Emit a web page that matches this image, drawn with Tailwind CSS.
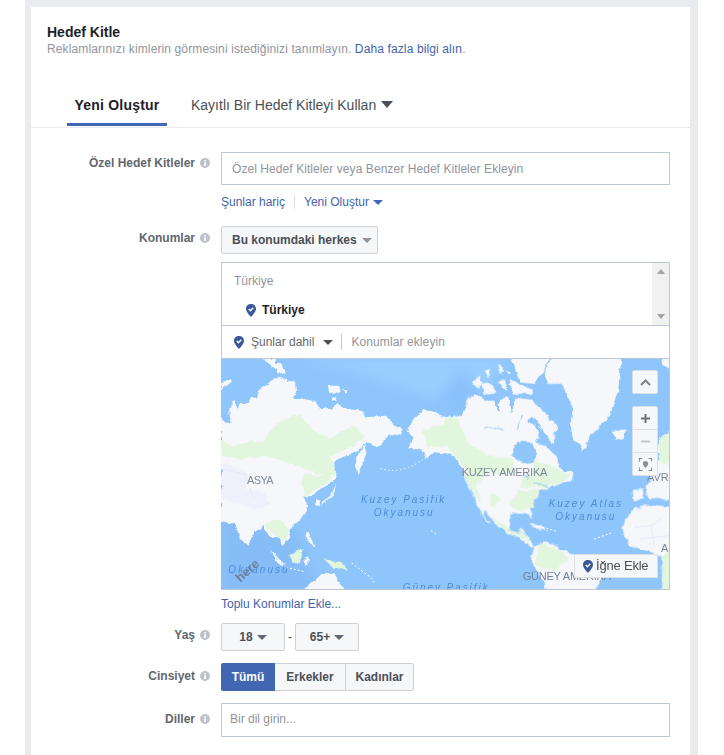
<!DOCTYPE html>
<html lang="tr">
<head>
  <meta charset="UTF-8">
  <title>Hedef Kitle</title>
  <script src="https://cdn.jsdelivr.net/npm/@tailwindcss/browser@4"></script>
</head>
<body class="bg-white font-['Liberation_Sans',Arial,sans-serif] overflow-hidden">
  <svg class="hidden">
    <symbol id="info" viewBox="0 0 10 10"><circle cx="5" cy="5" r="5" fill="#bec2c9"/><rect x="4.2" y="4.2" width="1.7" height="3.8" fill="#fff"/><rect x="4.3" y="2" width="1.6" height="1.5" fill="#fff"/></symbol>
    <symbol id="pin" viewBox="0 0 10 13"><path d="M5 0C2.2 0 0 2 0 4.7 0 7.6 3 10.6 5 13c2-2.4 5-5.4 5-8.3C10 2 7.8 0 5 0z" fill="#3b5998"/><path d="M2.8 5l1.6 1.7 2.9-3" fill="none" stroke="#fff" stroke-width="1.3"/></symbol>
  </svg>

  <div class="ml-[25px] w-[673px] h-[755px] bg-[#e9ebee] pt-[7px] pl-[6px] pr-[8px]">
    <div class="bg-white h-full">
      <div class="pl-[16px] pt-[17px]">
        <h2 class="text-[14px] leading-[17px] font-bold text-[#1d2129]">Hedef Kitle</h2>
        <p class="text-[12px] leading-[16px] text-[#90949c] tracking-[0.12px]">Reklamlarınızı kimlerin görmesini istediğinizi tanımlayın. <span class="text-[#3f63ad]">Daha fazla bilgi alın</span>.</p>
      </div>

      <!-- tabs -->
      <div class="flex h-[40px] mt-[31px] pl-[36px] border-b border-[#e9ebee]">
        <div class="w-[100px] h-[38px] border-b-[3px] border-[#4267b2] text-center text-[14px] leading-[34px] font-bold text-[#1d2129] tracking-[0.2px]">Yeni Oluştur</div>
        <div class="ml-[24px] flex items-center h-[35px] text-[14px] text-[#4b4f56]">
          Kayıtlı Bir Hedef Kitleyi Kullan
          <span class="ml-[5px] mb-[2px] border-x-[6px] border-x-transparent border-t-[7px] border-t-[#4b4f56]"></span>
        </div>
      </div>

      <!-- form -->
      <div class="pt-[24px] pr-[20px] text-[12px]">
        <div class="flex">
          <div class="w-[190px] flex justify-end items-center gap-[5px] pr-[11px] h-[22px] font-bold text-[#616770]">Özel Hedef Kitleler <svg class="w-[10px] h-[10px]"><use href="#info"/></svg></div>
          <div class="flex-1">
            <div class="h-[33px] border border-[#bdc7d8] pl-[10px] leading-[32px] text-[#90949c] tracking-[0.07px]">Özel Hedef Kitleler veya Benzer Hedef Kitleler Ekleyin</div>
            <div class="flex items-center h-[14px] mt-[10px] text-[#3f63ad]">
              <span>Şunlar hariç</span>
              <span class="w-px h-[14px] bg-[#dddfe2] mx-[9px]"></span>
              <span>Yeni Oluştur</span>
              <span class="ml-[4px] border-x-[5px] border-x-transparent border-t-[5px] border-t-[#4267b2]"></span>
            </div>
          </div>
        </div>

        <div class="flex mt-[17px]">
          <div class="w-[190px] flex justify-end items-center gap-[5px] pr-[11px] h-[24px] font-bold text-[#616770]">Konumlar <svg class="w-[10px] h-[10px]"><use href="#info"/></svg></div>
          <div class="flex-1">
            <div class="w-[157px] h-[28px] border border-[#ced0d4] rounded-[2px] bg-[#f6f7f9] flex items-center pl-[10px] font-bold text-[#4b4f56]">
              Bu konumdaki herkes
              <span class="ml-[5px] border-x-[5px] border-x-transparent border-t-[5px] border-t-[#90949c]"></span>
            </div>

            <div class="mt-[8px] border border-[#bdc7d8] border-b-0">
              <div class="flex h-[63px] border-b border-[#bdc7d8]">
                <div class="flex-1 pl-[12px] pt-[9px] text-[#90949c]">
                  Türkiye
                  <div class="flex items-center mt-[11px] ml-[12px] font-bold text-[#1d2129]"><svg class="w-[10px] h-[13px] mr-[6px]"><use href="#pin"/></svg>Türkiye</div>
                </div>
                <div class="w-[17px] bg-[#f1f1f1] flex flex-col items-center justify-between py-[6px]">
                  <span class="border-x-[4px] border-x-transparent border-b-[5px] border-b-[#a3a3a3]"></span>
                  <span class="border-x-[4px] border-x-transparent border-t-[5px] border-t-[#a3a3a3]"></span>
                </div>
              </div>
              <div class="flex items-center h-[33px] pl-[12px] border-b border-[#bdc7d8] text-[#616770]">
                <svg class="w-[10px] h-[13px] mr-[7px]"><use href="#pin"/></svg>
                Şunlar dahil
                <span class="ml-[9px] border-x-[5px] border-x-transparent border-t-[5px] border-t-[#4b4f56]"></span>
                <span class="w-px h-[16px] bg-[#bdc7d8] mx-[8px]"></span>
                <span class="ml-[1px] text-[#90949c] tracking-[0.1px]">Konumlar ekleyin</span>
              </div>

              <!-- map -->
              <div class="relative h-[231px] -ml-px -mr-px border-b border-r border-[#bdc7d8] overflow-hidden">
                <svg class="block w-[448px] h-[230px]" viewBox="0 0 1344 690">
                  <defs>
                    <filter id="coast" filterUnits="userSpaceOnUse" x="-40" y="-40" width="1424" height="770">
                      <feTurbulence type="fractalNoise" baseFrequency="0.04" numOctaves="4" seed="7" result="n"/>
                      <feDisplacementMap in="SourceGraphic" in2="n" scale="16" xChannelSelector="R" yChannelSelector="G"/>
                    </filter>
                    <filter id="soft" filterUnits="userSpaceOnUse" x="-40" y="-40" width="1424" height="770"><feGaussianBlur stdDeviation="14"/></filter>
                  </defs>
                  <rect width="1344" height="690" fill="#8ec5fb"/>
                  <g filter="url(#soft)">
                    <path d="M0 420C150 430 250 480 290 700L0 700z" fill="#86bdf6"/>
                    <path d="M240 0H860L800 90 640 120 430 50z" fill="#97cdff"/>
                    <path d="M640 130L720 30 790 110 740 170z" fill="#8bc2fb"/>
                  </g>

                  <g filter="url(#coast)">
                    <g fill="#f5f7fb">
                      <!-- asia -->
                      <path d="M0 175L15 190 28 195 25 150 40 125 50 150 55 135 85 130 85 118 105 115 112 90 140 75 150 62 180 50 200 65 222 68 225 100 215 120 250 120 270 125 285 125 300 150 330 150 350 135 380 150 420 155 430 175 495 170 520 200 548 210 540 230 510 225 490 245 465 265 440 250 420 270 390 285 350 300 335 330 348 345 335 370 300 385 275 410 248 413 262 445 235 485 205 510 208 535 188 560 175 535 150 540 130 500 100 520 85 560 65 550 40 495 0 485z"/>
                      <path d="M440 255L435 290 410 345 402 320 412 285z"/>
                      <path d="M0 70L30 60 25 75 0 95z"/>
                      <path d="M125 0H165L165 30 130 10z"/>
                      <path d="M165 15L185 15 195 40 165 45z"/>
                      <path d="M320 80L355 80 355 100 325 102z"/>
                      <path d="M362 88L382 95 375 105z"/>
                      <path d="M335 112L350 115 345 128 337 125z"/>
                      <path d="M345 375L340 405 300 445 305 430 330 410z"/>
                      <path d="M285 420L298 425 295 440 285 440z"/>
                      <path d="M255 520L265 520 280 565 260 550z"/>
                      <path d="M145 570L195 620 175 615z"/>
                      <path d="M250 600L262 595 258 620z"/>
                      <path d="M235 700L300 645 340 645 350 665 375 700z"/>
                      <!-- alaska -->
                      <path d="M560 215L575 185 610 150 672 175 700 172V285L640 280 610 300 615 285 590 265 565 272 577 235z"/>
                      <g transform="translate(672 0)">
                        <!-- canada -->
                        <path d="M0 175L25 172 50 170 68 125 90 105 120 125 145 125 165 160 165 120 190 115 198 165 215 115 240 120 262 122 290 155 310 175 340 210 325 225 328 258 300 225 288 205 262 170 250 190 285 215 270 250 300 258 330 290 345 325 365 350H60L35 300 0 262z"/>
                        <!-- upper arctic -->
                        <path d="M80 70L105 50 110 70 100 85z"/>
                        <path d="M105 75L135 70 155 100 120 105z"/>
                        <path d="M155 70L180 65 190 95z"/>
                        <path d="M190 60L220 75 260 90 260 105 205 105z"/>
                        <path d="M120 35L135 30 130 55z"/>
                        <path d="M155 15L175 30 165 45z"/>
                        <path d="M180 30L200 40 190 50z"/>
                        <path d="M195 -10H320L295 35 270 75 225 70 215 40z"/>
                        <!-- greenland -->
                        <path d="M295 40L325 -10H530L520 90 495 170 440 225 415 275 385 240 375 200 385 150 360 100 350 75 310 75z"/>
                        <path d="M500 215L545 215 535 240 515 245z"/>
                        <!-- europe -->
                        <path d="M650 -10H690V40L655 20z"/>
                        <path d="M635 265L660 225 690 215V350H630L640 310z"/>
                      </g>
                      <g transform="translate(672 345)">
                        <!-- usa, mexico -->
                        <path d="M55 -5H385L380 20 350 25 320 40 290 45 270 70 255 100 262 140 250 120 225 115 200 120 190 140 195 165 225 180 225 160 245 185 270 215 262 222 225 195 195 180 150 150 120 110 115 125 85 70 70 30z"/>
                        <path d="M105 110L135 150 125 145z"/>
                        <path d="M250 150L285 155 312 170 270 160z"/>
                        <path d="M565 50L590 40 595 75 570 80z"/>
                        <path d="M600 45L630 -5H690V80L610 72z"/>
                        <!-- africa -->
                        <path d="M530 160L560 110 610 90 690 100V350H652L650 250 620 235 555 215 535 190z"/>
                        <!-- south america -->
                        <path d="M272 215L300 200 345 225 390 240 480 300 450 350H310L290 320 258 265z"/>
                      </g>
                    </g>
                    <g fill="#e2f5dd">
                      <path d="M0 240L30 265 80 250 125 250 170 190 235 165 275 210 320 240 395 200 430 230 400 260 330 290 345 345 290 345 200 310 130 290 50 300 0 290z"/>
                      <path d="M250 345L290 350 335 340 325 370 290 385 255 410 240 380z"/>
                      <path d="M130 495L165 480 205 510 195 545 160 530z"/>
                      <path d="M205 585L245 570 240 610 215 615z"/>
                      <path d="M305 600L350 607 385 635 345 630z"/>
                      <path d="M600 215L672 195 672 260 620 265z"/>
                      <g transform="translate(672 0)">
                        <path d="M0 180L35 175 70 250 130 290 200 300 205 345H75L35 295 0 255z"/>
                        <path d="M270 300L340 330 365 345H260z"/>
                        <path d="M645 235L672 220 672 320 640 300z"/>
                      </g>
                      <g transform="translate(672 345)">
                        <path d="M60 0H120L95 40 110 90 85 60z"/>
                        <path d="M140 60L165 70 150 100 135 90z"/>
                        <path d="M240 0H380L350 22 300 40 225 40z"/>
                        <path d="M220 50L285 48 262 100 225 110 190 95z"/>
                        <path d="M120 115L150 135 225 182 225 165 245 187 268 212 225 190 180 170z"/>
                        <path d="M285 205L345 232 375 250 330 290 268 275z"/>
                        <path d="M650 250L690 215V350H655z"/>
                      </g>
                    </g>
                    <path d="M0 310L40 320 90 345 70 390 130 400 150 440 100 450 50 430 0 420z" fill="#eef0fb"/>
                    <!-- hudson bay, channels, lakes -->
                    <path d="M877 262L890 248 934 250 945 290 937 312 912 315 877 292z" fill="#8ec5fb"/>
                    <path d="M792 205L850 212M905 170L885 215M905 345L925 355M935 375L960 372 985 385" fill="none" stroke="#8ec5fb" stroke-width="3"/>
                  </g>

                  <!-- small islands, borders -->
                  <g fill="none" stroke="#fff">
                    <path d="M478 328Q550 352 628 284" stroke-width="3" stroke-dasharray="4 8"/>
                    <path d="M195 625L250 638M630 515L645 525M392 612L448 655 460 672M930 495L985 510 1010 518M1120 540L1170 522" stroke-width="3" stroke-dasharray="6 6"/>
                  </g>
                  <path d="M1240 505L1290 500 1320 480M1290 500L1300 560M1255 540L1344 530M0 330L70 345 100 420" fill="none" stroke="#dfe2f6" stroke-width="2"/>

                  <g font-family="'Liberation Sans',Arial,sans-serif" font-size="33">
                    <g fill="#7f8a97">
                      <text x="78" y="376" textLength="80">ASYA</text>
                      <text x="722" y="351" textLength="257">KUZEY AMERIKA</text>
                      <text x="905" y="664" textLength="265" fill="#6e7f99">GÜNEY AMERIKA</text>
                      <text x="1278" y="366">AVR</text>
                      <text x="1320" y="578">A</text>
                    </g>
                    <g fill="#4f8bd8" font-style="italic" font-size="30">
                      <text x="420" y="431" textLength="250">Kuzey Pasifik</text>
                      <text x="458" y="470" textLength="177">Okyanusu</text>
                      <text x="983" y="443" textLength="217">Kuzey Atlas</text>
                      <text x="1003" y="482" textLength="177">Okyanusu</text>
                      <text x="22" y="643" textLength="178">Okyanusu</text>
                      <text x="545" y="697" textLength="255">Güney Pasifik</text>
                    </g>
                    <text x="40" y="655" transform="rotate(-42 70 640)" font-weight="bold" font-size="38" fill="#66758a" fill-opacity=".85">here</text>
                  </g>
                </svg>

                <div class="absolute right-[11px] top-[11px] w-[26px] h-[24px] bg-[#f6f7f9] border border-[#dddfe2] rounded-[2px] flex items-center justify-center">
                  <svg class="w-[11px] h-[7px]" viewBox="0 0 11 7"><path d="M1 6l4.500-4.500L10 6" fill="none" stroke="#7f8389" stroke-width="2"/></svg>
                </div>
                <div class="absolute right-[11px] top-[47px] w-[26px] h-[70px] bg-[#f6f7f9] border border-[#dddfe2] rounded-[2px] flex flex-col divide-y divide-[#dddfe2]">
                  <div class="flex-1 flex items-center justify-center">
                    <svg class="w-[9px] h-[9px]" viewBox="0 0 9 9"><path d="M4.500 0v9M0 4.500h9" stroke="#6f7379" stroke-width="2"/></svg>
                  </div>
                  <div class="flex-1 flex items-center justify-center">
                    <svg class="w-[9px] h-[9px]" viewBox="0 0 9 9"><path d="M0 4.500h9" stroke="#c4c7cc" stroke-width="2"/></svg>
                  </div>
                  <div class="flex-1 flex items-center justify-center">
                    <svg class="w-[13px] h-[13px]" viewBox="0 0 13 13"><path d="M0 3.500V0h3.500M9.500 0H13v3.500M13 9.500V13H9.500M3.500 13H0V9.500" fill="none" stroke="#6f7379" stroke-width="1.600"/><path d="M6.500 3C5 3 3.800 4.100 3.800 5.600 3.800 7.300 5.500 8.900 6.500 10.200 7.500 8.900 9.200 7.300 9.200 5.600 9.200 4.100 8 3 6.500 3z" fill="#8d9096"/></svg>
                  </div>
                </div>
                <div class="absolute right-[11px] bottom-[11px] w-[84px] h-[24px] bg-[#f6f7f9] border border-[#dddfe2] flex items-center pl-[8px] text-[#4b4f56]">
                  <svg class="w-[10px] h-[13px] mr-[3px] shrink-0"><use href="#pin"/></svg>
                  <span class="text-[13px] tracking-[-0.2px]">İğne Ekle</span>
                </div>
              </div>
            </div>

            <div class="mt-[7px] h-[14px] leading-[14px] text-[#3f63ad]">Toplu Konumlar Ekle...</div>
          </div>
        </div>

        <div class="flex mt-[12px]">
          <div class="w-[190px] flex justify-end items-center gap-[5px] pr-[11px] h-[24px] font-bold text-[#616770]">Yaş <svg class="w-[10px] h-[10px]"><use href="#info"/></svg></div>
          <div class="flex items-center font-bold text-[#4b4f56]">
            <div class="w-[64px] h-[28px] border border-[#ced0d4] rounded-[2px] bg-[#f6f7f9] flex items-center justify-center">18<span class="ml-[4px] border-x-[5px] border-x-transparent border-t-[5px] border-t-[#606770]"></span></div>
            <span class="w-[10px] text-center font-normal">-</span>
            <div class="w-[64px] h-[28px] border border-[#ced0d4] rounded-[2px] bg-[#f6f7f9] flex items-center justify-center">65+<span class="ml-[4px] border-x-[5px] border-x-transparent border-t-[5px] border-t-[#606770]"></span></div>
          </div>
        </div>

        <div class="flex mt-[12px]">
          <div class="w-[190px] flex justify-end items-center gap-[5px] pr-[11px] h-[26px] font-bold text-[#616770]">Cinsiyet <svg class="w-[10px] h-[10px]"><use href="#info"/></svg></div>
          <div class="flex h-[28px] font-bold text-[#4b4f56]">
            <div class="w-[54px] bg-[#4267b2] rounded-l-[2px] text-white flex items-center justify-center">Tümü</div>
            <div class="w-[70px] bg-[#f6f7f9] border-y border-[#ced0d4] flex items-center justify-center">Erkekler</div>
            <div class="w-[69px] bg-[#f6f7f9] border border-[#ced0d4] rounded-r-[2px] flex items-center justify-center">Kadınlar</div>
          </div>
        </div>

        <div class="flex mt-[12px]">
          <div class="w-[190px] flex justify-end items-center gap-[5px] pr-[11px] h-[32px] font-bold text-[#616770]">Diller <svg class="w-[10px] h-[10px]"><use href="#info"/></svg></div>
          <div class="flex-1 h-[34px] border border-[#bdc7d8] pl-[8px] leading-[31px] text-[#90949c]">Bir dil girin...</div>
        </div>
      </div>
    </div>
  </div>
</body>
</html>
